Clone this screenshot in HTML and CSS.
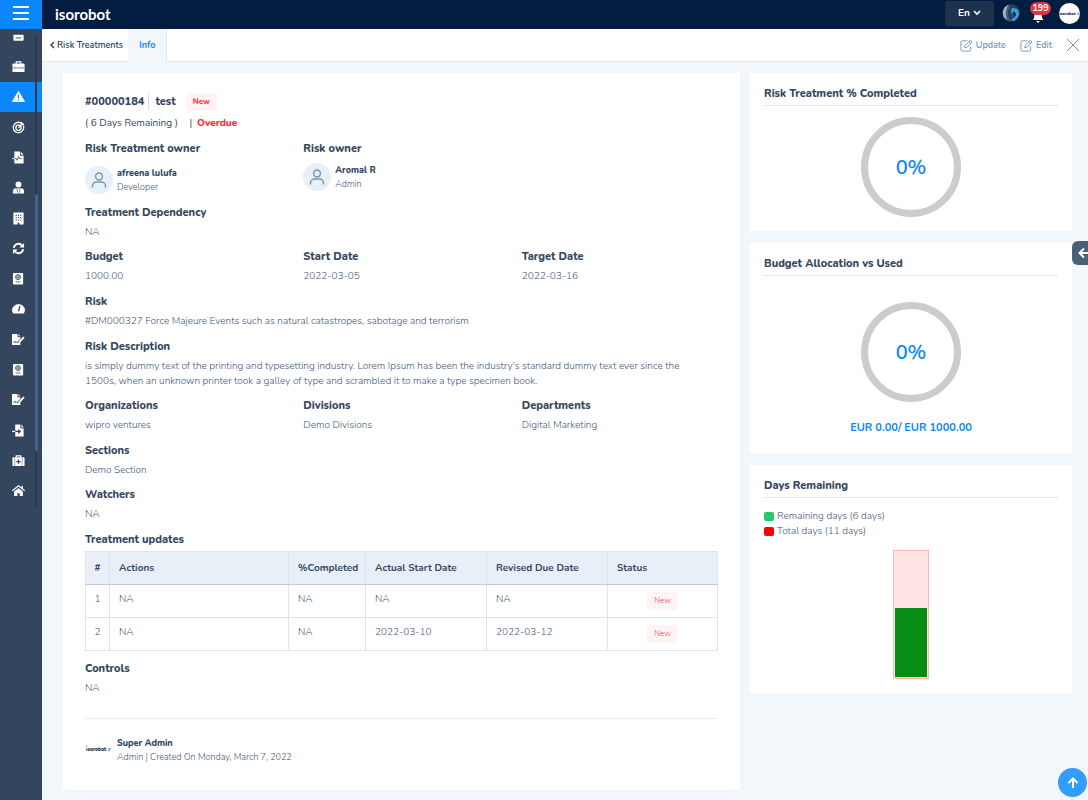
FILE: index.html
```html
<!DOCTYPE html>
<html lang="en">
<head>
<meta charset="utf-8">
<title>Risk Treatment</title>
<link rel="stylesheet" href="styles.css">
</head>
<body>
<svg class="sprite" aria-hidden="true">
  <symbol id="doc-pen" viewBox="0 0 14 12"><path fill="#fff" d="M0 0h6v3.500h3v2L6 8v2l2-.3L9 9v3H0z"/><path fill="#fff" d="M7 0l2 2.500H7z"/><path fill="#fff" d="M7 8.200l5.200-5.400 1.400 1.300L8.500 9.500l-1.700.3z"/><path d="M1.500 9.500l1.500-2 1 2 1-.8 1 .8" fill="none" stroke="#33465e" stroke-width=".9"/></symbol>
  <symbol id="passport" viewBox="0 0 12 14"><rect x="0" y="1" width="11" height="12.500" rx="1" fill="#fff"/><circle cx="5.500" cy="5.500" r="2.600" fill="none" stroke="#33465e"/><path d="M3 5.500h5M5.500 3v5M3 10.700h5" stroke="#33465e" stroke-width=".8"/></symbol>
  <symbol id="person" viewBox="0 0 28 28"><circle cx="14" cy="10.500" r="3.400"/><path d="M7.500 21.500v-1.500a4 4 0 0 1 4-4h5a4 4 0 0 1 4 4v1.500"/></symbol>
  <symbol id="edit" viewBox="0 0 14 14"><path d="M8 2H2.500Q1 2 1 3.500v8Q1 13 2.500 13h7.500q1.500 0 1.500-1.500V8"/><path d="M5 9.500l.5-2.500L11 1.300l2 1.900L7.400 9zM9.500 2.800l2 2"/></symbol>
</svg>
<header class="topbar">
  <button class="menu" aria-label="Menu"><span></span><span></span><span></span></button>
  <a class="brand" href="#">isorobot</a>
  <div class="tools">
    <button class="lang">En <svg width="8" height="6" viewBox="0 0 8 6"><path d="M1 1l3 3 3-3" fill="none" stroke="#fff" stroke-width="1.600"/></svg></button>
    <svg class="globe" width="18" height="18" viewBox="0 0 18 18"><circle cx="9" cy="9" r="8.500" fill="#4a5f78"/><path d="M6 1a8.500 8.500 0 0 0-1 15Q2 9 6 1z" fill="#a9b4c2"/><path d="M8 1q6-1 9 5-3-3-6-1-3 3 0 7l-2 5q-4-4-3-9z" fill="#24415f"/><path d="M10 4q6 0 7 5 0 5-5 8l-3-1q4-1 4-5-1-3-4-2 0-4 1-5z" fill="#31a4dc"/><path d="M11 7q3 1 3 4l-2 3z" fill="#10263f"/></svg>
    <button class="bell" aria-label="Notifications"><svg width="14" height="14" viewBox="0 0 14 14"><path fill="#fff" d="M2 11q1.500-2 1.500-5.500 0-3.500 3.500-3.500t3.500 3.500Q10.500 9 12.500 11zM5.500 12h3q0 1.800-1.500 1.800T5.500 12z"/></svg><span class="count">199</span></button>
    <span class="me">isorobot <b>⁝r</b></span>
  </div>
</header>
<div class="shell">
  <nav class="side" aria-label="Modules">
    <div class="track"><div class="thumb"></div></div>
    <div class="items">
      <a href="#" aria-label="Archive"><svg viewBox="0 0 14 14"><path d="M1.500 5h11v5.500q0 1-1 1h-9q-1 0-1-1z" fill="#fff"/><path d="M4 8.500h6" stroke="#33465e"/></svg></a>
      <a href="#" aria-label="Work"><svg viewBox="0 0 14 14"><path d="M4.500 4V2h5v2" fill="none" stroke="#fff" stroke-width="1.200"/><rect x=".5" y="3.700" width="13" height="9.300" rx="1" fill="#fff"/><path d="M1 8.500h4.500M8.500 8.500H13M6 8.500h2" stroke="#33465e" stroke-width=".8"/></svg></a>
      <a href="#" class="active" aria-label="Risk"><svg viewBox="0 0 14 14"><path fill="#fff" d="M7 .8L13.800 12q.2 1-.6 1H.8q-.8 0-.6-1z"/><path d="M7 5v4M7 10.200v1.400" stroke="#0a88fb" stroke-width="1.500"/></svg></a>
      <a href="#" aria-label="Targets"><svg viewBox="0 0 14 14" fill="none" stroke="#fff" stroke-width="1.400"><path d="M9.500 2A5.600 5.600 0 1 0 12.200 5"/><circle cx="7" cy="7.200" r="2.800"/><path d="M7 7.200l5-5M10 1v3h3"/></svg></a>
      <a href="#" aria-label="Reports"><svg viewBox="0 0 14 14"><path fill="#fff" d="M2.500 .5h6V5h4v8.500h-10z M9.300 .5l3.200 3.500H9.300z"/><path d="M0 8h3" stroke="#fff"/><path d="M3 8h1.500l1 2 1.500-4 1 2h2.500" fill="none" stroke="#33465e" stroke-width=".9"/></svg></a>
      <a href="#" aria-label="Staff"><svg viewBox="0 0 14 14"><circle cx="7" cy="3.700" r="3.200" fill="#fff"/><path fill="#fff" d="M1 13.500V11q0-3 3.500-3.200L7 8l2.500-.2Q13 8 13 11v2.500z"/><path d="M5.200 8.500l1 4M8.800 8.500l-1 4" stroke="#33465e" stroke-width=".7"/></svg></a>
      <a href="#" aria-label="Organization"><svg viewBox="0 0 14 14"><path fill="#fff" d="M1.500 .5h11v13H8v-2H6v2H1.500z"/><path d="M4.500 3v6.500M7 3v6.500M9.500 3v6.500" stroke="#33465e" stroke-width="1.200" stroke-dasharray="1.200 1.300"/></svg></a>
      <a href="#" aria-label="Refresh"><svg viewBox="0 0 14 14" fill="none" stroke="#fff" stroke-width="2"><path d="M2 6.300a5 5 0 0 1 9-2.300M12 7.700a5 5 0 0 1-9 2.300"/><path d="M13 1v5H8zM1 13V8h5z" fill="#fff" stroke="none"/></svg></a>
      <a href="#" aria-label="Policies"><svg><use href="#passport"/></svg></a>
      <a href="#" aria-label="Dashboard"><svg viewBox="0 0 14 14"><path fill="#fff" d="M1.300 12.500A6.700 6.700 0 1 1 12.700 12.500z"/><path d="M7 10l1.600-5.500" stroke="#33465e" stroke-width="1.300"/></svg></a>
      <a href="#" aria-label="Contracts"><svg><use href="#doc-pen"/></svg></a>
      <a href="#" aria-label="Compliance"><svg><use href="#passport"/></svg></a>
      <a href="#" aria-label="Signatures"><svg><use href="#doc-pen"/></svg></a>
      <a href="#" aria-label="Import"><svg viewBox="0 0 14 14"><path fill="#fff" d="M3.500 .5H9V4.500h3.500v9h-9z M10 .5l2.500 3H10z"/><path d="M0 8h3.500" stroke="#fff" stroke-width="1.300"/><path d="M3.500 8H8M6.500 6L9 8l-2.500 2" fill="none" stroke="#33465e" stroke-width="1.200"/></svg></a>
      <a href="#" aria-label="First aid"><svg viewBox="0 0 14 14"><path d="M4.500 4V2h5v2" fill="none" stroke="#fff" stroke-width="1.200"/><rect x=".5" y="3.500" width="13" height="9.500" rx="1" fill="#fff"/><path d="M3 4v9M11 4v9" stroke="#33465e" stroke-width=".5"/><path d="M7 6v4.600M4.700 8.300h4.600" stroke="#33465e" stroke-width="1.300"/></svg></a>
      <a href="#" aria-label="Home"><svg viewBox="0 0 14 14"><path d="M.3 7.300L7 2l6.700 5.300M11 2v3" fill="none" stroke="#fff" stroke-width="1.400"/><path fill="#fff" d="M2.300 8L7 4.300 11.700 8v5H8.300v-3H5.700v3H2.300z"/></svg></a>
    </div>
  </nav>
  <div class="page">
    <div class="tabs">
      <a class="back" href="#"><svg width="5" height="8" viewBox="0 0 5 8"><path d="M4 1L1 4l3 3" fill="none" stroke="#2d4057" stroke-width="1.400"/></svg>Risk Treatments</a>
      <a class="tab" href="#">Info</a>
      <div class="acts">
        <button><svg width="13" height="13"><use href="#edit"/></svg>Update</button>
        <button><svg width="13" height="13"><use href="#edit"/></svg>Edit</button>
        <button aria-label="Close"><svg width="14" height="14" viewBox="0 0 14 14"><path d="M1 1l12 12M13 1L1 13"/></svg></button>
      </div>
    </div>
    <div class="content">
      <main class="card main">
        <div class="title"><h1>#00000184</h1><h1 class="name">test</h1><span class="pill strong">New</span></div>
        <p class="due">( 6 Days Remaining ) <span class="bar">|</span><strong>Overdue</strong></p>
        <div class="row people">
          <section><h2>Risk Treatment owner</h2><div class="person lower"><span class="avatar"><svg><use href="#person"/></svg></span><div><b>afreena lulufa</b><span>Developer</span></div></div></section>
          <section><h2>Risk owner</h2><div class="person"><span class="avatar"><svg><use href="#person"/></svg></span><div><b>Aromal R</b><span>Admin</span></div></div></section>
        </div>
        <div class="row tight"><section><h2>Treatment Dependency</h2><p>NA</p></section></div>
        <div class="row">
          <section><h2>Budget</h2><p>1000.00</p></section>
          <section><h2>Start Date</h2><p>2022-03-05</p></section>
          <section><h2>Target Date</h2><p>2022-03-16</p></section>
        </div>
        <section class="full"><h2>Risk</h2><p>#DM000327 Force Majeure Events such as natural catastropes, sabotage and terrorism</p></section>
        <section class="full tight"><h2>Risk Description</h2><p>is simply dummy text of the printing and typesetting industry. Lorem Ipsum has been the industry's standard dummy text ever since the 1500s, when an unknown printer took a galley of type and scrambled it to make a type specimen book.</p></section>
        <div class="row">
          <section><h2>Organizations</h2><p>wipro ventures</p></section>
          <section><h2>Divisions</h2><p>Demo Divisions</p></section>
          <section><h2>Departments</h2><p>Digital Marketing</p></section>
        </div>
        <section class="full tight"><h2>Sections</h2><p>Demo Section</p></section>
        <section class="full"><h2>Watchers</h2><p>NA</p></section>
        <section class="updates"><h2>Treatment updates</h2>
          <table>
            <colgroup><col class="c1"><col><col class="c3"><col class="c4"><col class="c4"><col class="c5"></colgroup>
            <thead><tr><th>#</th><th>Actions</th><th>%Completed</th><th>Actual Start Date</th><th>Revised Due Date</th><th>Status</th></tr></thead>
            <tbody>
              <tr><td>1</td><td>NA</td><td>NA</td><td>NA</td><td>NA</td><td class="status"><span class="pill">New</span></td></tr>
              <tr><td>2</td><td>NA</td><td>NA</td><td>2022-03-10</td><td>2022-03-12</td><td class="status"><span class="pill">New</span></td></tr>
            </tbody>
          </table>
        </section>
        <section><h2>Controls</h2><p>NA</p></section>
        <footer class="person author"><span class="mini">isorobot <b>⁝r</b></span><div><b>Super Admin</b><span>Admin | Created On Monday, March 7, 2022</span></div></footer>
      </main>
      <aside>
        <section class="card widget"><h2>Risk Treatment % Completed</h2><div class="ring">0%</div></section>
        <section class="card widget budget"><h2>Budget Allocation vs Used</h2><div class="ring">0%</div><p>EUR 0.00/ EUR 1000.00</p></section>
        <section class="card widget days"><h2>Days Remaining</h2>
          <ul><li><i class="green"></i>Remaining days (6 days)</li><li><i class="red"></i>Total days (11 days)</li></ul>
          <div class="gauge"><div class="fill" style="height:55%"></div></div>
        </section>
      </aside>
    </div>
  </div>
</div>
<button class="drawer" aria-label="Open panel"><svg width="12" height="12" viewBox="0 0 12 12"><path d="M12 6H2M6 1.500L1.500 6 6 10.500"/></svg></button>
<button class="up" aria-label="Back to top"><svg width="12" height="12" viewBox="0 0 12 12"><path d="M6 11V2M1.500 6L6 1.500 10.500 6"/></svg></button>
</body>
</html>
```
FILE: styles.css
```css
* { box-sizing: border-box; }
body { margin: 0; min-height: 100vh; display: flex; flex-direction: column; background: #f1f7fa; color: #425878; font: 300 10px/15px Nunito, Lato, sans-serif; }
h1, h2, p, ul { margin: 0; padding: 0; }
button { border: 0; padding: 0; background: none; font: inherit; color: inherit; }
a { color: inherit; text-decoration: none; }
svg { display: block; flex: none; }
.sprite { position: absolute; width: 0; height: 0; }

.topbar { display: flex; align-items: stretch; height: 29px; background: #021d40; color: #fff; }
.menu { width: 42px; display: flex; flex-direction: column; align-items: center; justify-content: center; gap: 4px; background: #0a88fb; padding-bottom: 4px; }
.menu span { width: 16px; height: 2px; background: #fff; }
.brand { margin-left: 13px; font-family: Lato, sans-serif; font-weight: 700; font-size: 15px; line-height: 28px; }
.tools { margin-left: auto; display: flex; align-items: center; padding: 0 8px 3px 0; }
.lang { width: 49px; height: 25px; margin-right: 8px; border-radius: 3px; background: #1d324f; font-weight: 700; display: flex; align-items: center; justify-content: center; gap: 3px; }
.bell { position: relative; margin: 0 14px 0 11px; padding-top: 3px; }
.bell svg { margin-top: 3px; }
.count { position: absolute; left: -1px; top: -1px; width: 21px; height: 13px; border-radius: 7px; background: #dc3545; font-weight: 700; font-size: 9px; line-height: 13px; text-align: center; }
.me { width: 21px; height: 21px; border-radius: 50%; background: #fff; color: #1c2b3d; font-size: 4px; line-height: 21px; text-align: center; font-weight: 900; white-space: nowrap; }
.me b, .mini b { color: #1c7fa8; }

.shell { flex: 1; display: flex; }
.side { position: relative; width: 42px; flex: none; background: #33465e; overflow: hidden; }
.track { position: absolute; left: 35px; top: 7px; width: 2px; height: 470px; background: #283a50; }
.thumb { margin: 158px 0 0; width: 3px; height: 257px; border-radius: 2px; background: #47638a; }
.items { display: flex; flex-direction: column; height: 485px; margin-top: -8px; }
.items a { flex: 1; display: flex; align-items: center; padding-left: 12px; }
.items a.active { background: #0a88fb; }
.items svg { width: 13px; height: 13px; }

.page { flex: 1; min-width: 0; }
.tabs { display: flex; height: 33px; background: #fff; border-bottom: 1px solid #e4ecf3; }
.back { display: flex; align-items: center; gap: 2px; padding: 0 5px 0 8px; color: #2d4057; font-size: 9px; font-weight: 600; }
.tab { padding: 0 11px; height: 33px; background: #f1f7fa; border-right: 1px solid #e1e9ee; color: #0a88fb; font-size: 9px; font-weight: 700; line-height: 32px; }
.acts { margin-left: auto; padding-right: 8px; display: flex; align-items: center; gap: 14px; color: #7991b4; font-size: 9px; font-weight: 600; }
.acts button { display: flex; align-items: center; gap: 3px; }
.acts svg { fill: none; stroke: #7991b4; stroke-width: 1; }

.content { display: grid; grid-template-columns: 677fr 322fr; gap: 10px; align-items: start; padding: 11px 16px 10px 21px; }
.card { background: #fff; }
.main { padding: 19px 22px 26px; }
h1, h2 { color: #33465e; font-weight: 800; font-size: 11px; line-height: 17px; }
.title { display: flex; align-items: center; height: 19px; }
.name { margin-left: 4px; padding-left: 6px; border-left: 1px solid #d5e0ea; }
.pill { display: inline-block; padding: 0 7px; height: 18px; border-radius: 3px; background: #fff4f4; color: #ff3b4a; font-size: 8px; line-height: 18px; }
.pill.strong { margin-left: 10px; font-weight: 800; }
.due { margin-top: 5px; color: #33465e; font-weight: 400; }
.bar { margin: 0 5px 0 9px; }
.due strong { color: #ff2a3a; font-weight: 800; }
.row { display: grid; grid-template-columns: repeat(3, 1fr); margin: 0 -22px 9px 0; }
.full { margin-bottom: 9px; padding-right: 16px; }
.row.tight, .full.tight { margin-bottom: 8px; }
.main section p { margin-top: 4px; }
.people { margin-top: 9px; margin-bottom: 10px; }
.person { display: flex; align-items: center; gap: 4px; margin-top: 6px; font-size: 9px; line-height: 14px; }
.person.lower { margin-top: 9px; }
.person b { display: block; color: #33465e; font-size: 9px; font-weight: 800; }
.person div span { display: block; }
.avatar { width: 28px; height: 28px; border-radius: 50%; background: #e9eff6; }
.avatar svg { width: 28px; height: 28px; fill: none; stroke: #7b98a8; stroke-width: 1.500; }
.updates { margin-bottom: 9px; }
table { width: 100%; margin-top: 3px; border-collapse: collapse; table-layout: fixed; border: 1px solid #dce5ef; }
.c1 { width: 24px; } .c3 { width: 77px; } .c4 { width: 121px; } .c5 { width: 110px; }
th, td { height: 33px; padding: 0 8px 0 9px; text-align: left; border: 1px solid #dce5ef; }
th { background: #e9eff6; color: #33465e; font-weight: 700; border-bottom-color: #bccada; white-space: nowrap; }
th:nth-child(n+3):nth-child(-n+5), td:nth-child(n+3):nth-child(-n+5) { border-left-color: #bccada; }
th:first-child, td:first-child { padding: 0; text-align: center; }
td, td:first-child { padding-bottom: 4px; }
td.status { text-align: center; padding: 0; vertical-align: middle; }
.author { margin-top: 22px; padding-top: 17px; border-top: 1px solid #e5eaee; }
.mini { width: 28px; padding-left: 1px; color: #22344a; font-size: 5px; font-weight: 900; white-space: nowrap; }
.mini b { display: inline; font-size: 5px; color: #1c7fa8; }

aside { display: grid; gap: 12px; }
.widget { padding: 12px 14px 14px; }
.widget h2 { padding-bottom: 3px; border-bottom: 1px solid #e3e5e7; }
.ring { display: flex; align-items: center; justify-content: center; width: 100px; height: 100px; margin: 11px auto 0; border: 7px solid #ccc; border-radius: 50%; color: #0a88fb; font-size: 20px; font-weight: 600; }
.budget .ring { margin-top: 26px; }
.budget p { margin-top: 18px; padding-bottom: 4px; text-align: center; color: #0a88fb; font-weight: 700; font-size: 11px; }
.days ul { margin-top: 11px; list-style: none; }
.days li { display: flex; align-items: center; gap: 3px; }
.days i { width: 10px; height: 9px; border-radius: 2px; }
.green { background: #28c76f; }
.red { background: #f00; }
.gauge { display: flex; align-items: flex-end; width: 36px; height: 129px; margin: 11px auto 0; padding: 1px; border: 1px solid #ffb4b4; background: #ffe4e4; }
.fill { width: 100%; background: #058d16; }
.drawer { position: fixed; right: 0; top: 241px; width: 16px; height: 24px; padding-left: 6px; border-radius: 6px 0 0 6px; background: #4a607a; overflow: hidden; }
.up { position: fixed; right: 1px; bottom: 3px; width: 29px; height: 29px; display: flex; align-items: center; justify-content: center; border-radius: 50%; background: #339dff; }
.drawer svg, .up svg { fill: none; stroke: #fff; stroke-width: 2; }
```
